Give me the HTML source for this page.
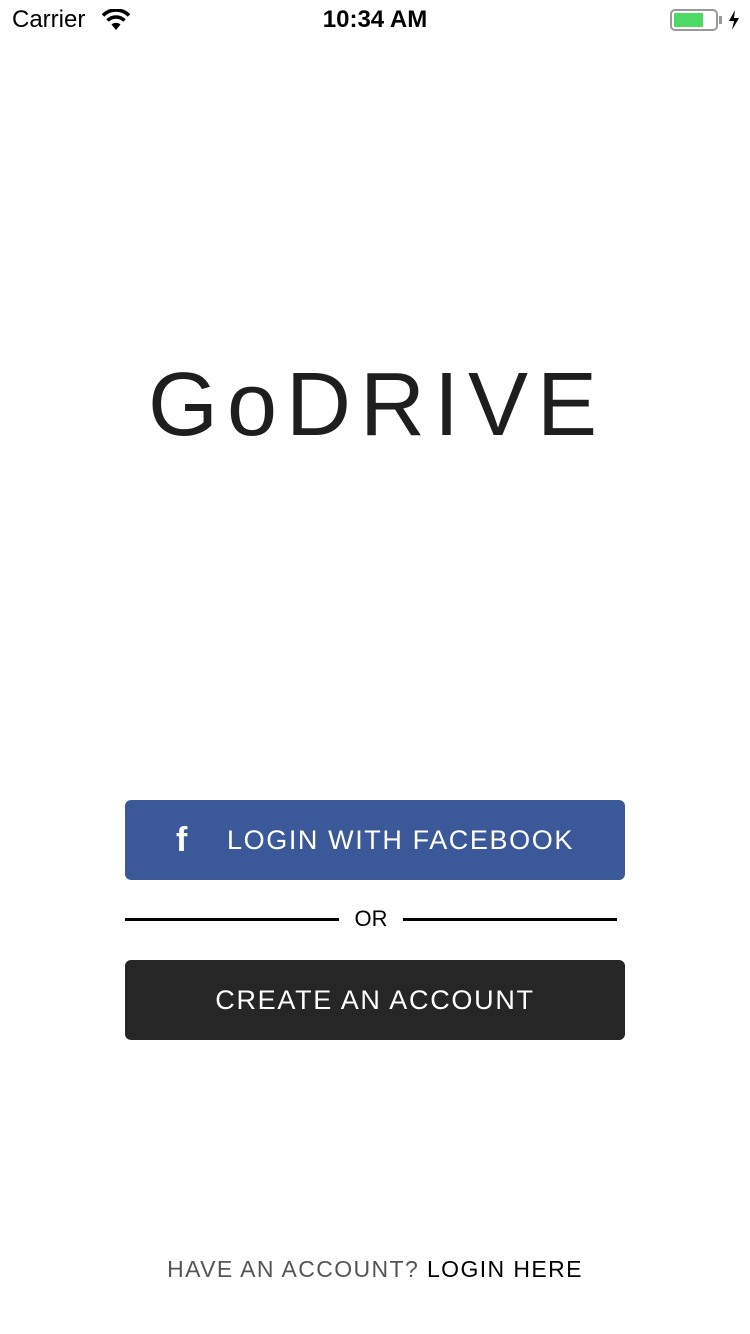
<!DOCTYPE html>
<html><head><meta charset="utf-8"><style>
*{margin:0;padding:0;box-sizing:border-box}
body{width:750px;height:1334px;background:#fff;position:relative;font-family:"Liberation Sans",sans-serif;overflow:hidden}
.abs{position:absolute}
.btn{position:absolute;left:125px;width:500px;height:80px;border-radius:6px;color:#fff;font-size:27px;letter-spacing:1.6px;line-height:80px}
</style></head><body>
<div class="abs" style="left:12px;top:6px;font-size:24px;color:#000">Carrier</div>
<svg class="abs" style="left:101px;top:9px" width="30" height="22" viewBox="0 0 30 22"><path d="M15 21 L10.5 15.5 A7 7 0 0 1 19.5 15.5Z" fill="#000"/><path d="M6.5 11.5 A12 12 0 0 1 23.5 11.5" stroke="#000" stroke-width="3.5" fill="none"/><path d="M2 6.5 A18 18 0 0 1 28 6.5" stroke="#000" stroke-width="3.5" fill="none"/></svg>
<div class="abs" style="left:0;width:750px;text-align:center;top:6px;font-size:24px;font-weight:bold;color:#000">10:34 AM</div>
<div class="abs" style="left:670px;top:9px;width:48px;height:22px;border:2px solid #999;border-radius:5px"></div>
<div class="abs" style="left:674px;top:13px;width:29px;height:14px;background:#4cd964"></div>
<div class="abs" style="left:719px;top:16px;width:3px;height:8px;background:#999"></div>
<svg class="abs" style="left:728px;top:10px" width="12" height="20" viewBox="0 0 12 20"><path d="M7 0 L1 11 H6 L4 20 L11 8 H6 Z" fill="#000"/></svg>
<div class="abs" style="left:0;width:750px;text-align:center;top:350px;font-size:90px;letter-spacing:9px;color:#1e1e1e;line-height:110px;padding-left:4px">GoDRIVE</div>
<div class="btn" style="top:800px;background:#3b5998">
<span class="abs" style="left:51px;top:0;font-size:34px;font-weight:bold">f</span>
<span class="abs" style="left:102px;top:0">LOGIN WITH FACEBOOK</span></div>
<div class="abs" style="left:125px;top:918px;width:214px;height:3px;background:#000"></div>
<div class="abs" style="left:403px;top:918px;width:214px;height:3px;background:#000"></div>
<div class="abs" style="left:340px;width:62px;text-align:center;top:906px;font-size:22px;color:#000">OR</div>
<div class="btn" style="top:960px;background:#262626;text-align:center;letter-spacing:1.7px">CREATE AN ACCOUNT</div>
<div class="abs" style="left:0;width:750px;text-align:center;top:1256px;font-size:23px;letter-spacing:1.4px"><span style="color:#555">HAVE AN ACCOUNT?</span> <span style="color:#000">LOGIN HERE</span></div>
</body></html>
